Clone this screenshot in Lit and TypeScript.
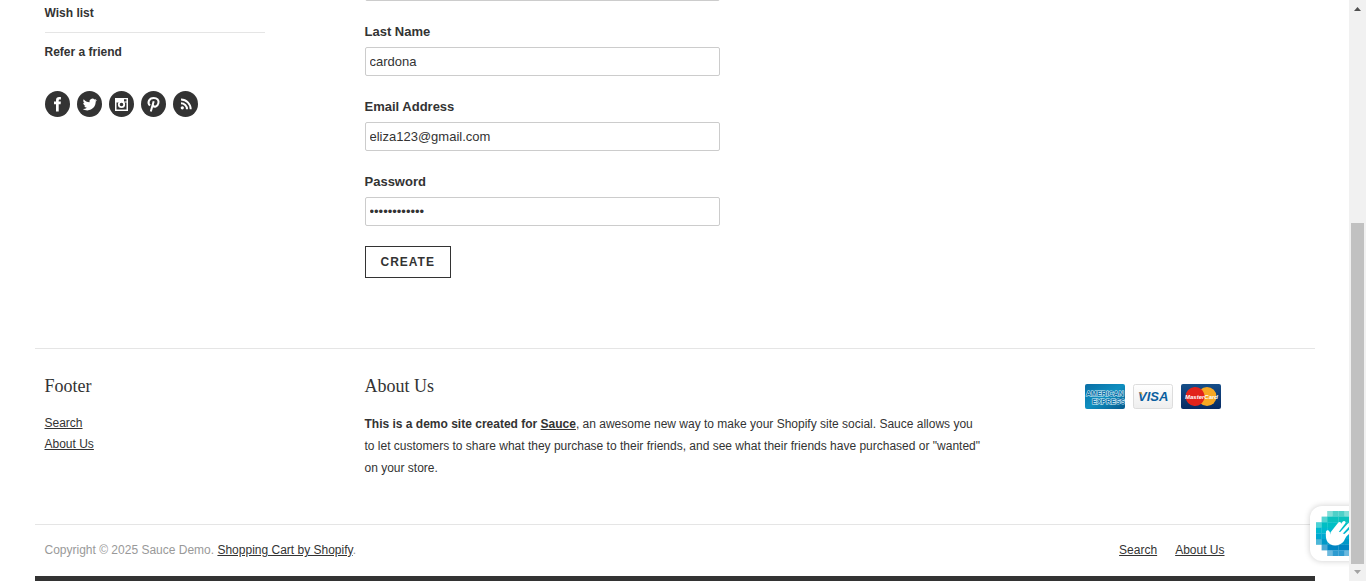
import { LitElement, html, svg, css } from "lit";
import { customElement } from "lit/decorators.js";

@customElement("social-links")
class SocialLinks extends LitElement {
  static styles = css`
    :host { display: block; }
    ul { display: flex; gap: 7px; margin: 0; padding: 0; list-style: none; }
    a { display: block; }
    svg { display: block; width: 25px; height: 26px; }
    .disc { fill: #333; }
    .mark { fill: #fff; }
    .line { fill: none; stroke: #fff; stroke-width: 2; }
  `;

  private items = [
    { name: "Facebook", art: svg`<path class="mark" d="M11 20.500v-7.300H9v-2.600h2V9.300C11 7 12.200 6 14.100 6h1.800v2.400h-1.100c-.9 0-1.100.4-1.100 1.100v1.100h2.200l-.3 2.600h-1.900v7.300z"/>` },
    { name: "Twitter", art: svg`<path class="mark" d="M19.800 8.900c-.5.2-1 .4-1.600.4.600-.3 1-.9 1.200-1.500-.5.300-1.100.5-1.800.7a3 3 0 0 0-5.100 2.700c-2.300-.1-4.400-1.200-5.800-3-.8 1.300-.4 3 .8 3.900-.4 0-.9-.1-1.300-.4 0 1.500 1 2.700 2.300 3-.4.100-.9.100-1.300 0 .4 1.200 1.500 2 2.700 2a6 6 0 0 1-4.200 1.300c1.300.9 2.900 1.400 4.600 1.400 5.500 0 8.500-4.600 8.400-8.800.5-.4.900-1 1.100-1.700z"/>` },
    { name: "Instagram", art: svg`<path class="mark" fill-rule="evenodd" d="M6 7h13v13H6zM7.500 11.500v7h10v-7zM15 8.300v2.200h2.500V8.300z"/><circle cx="12.500" cy="13.500" r="2.700" fill="#333" stroke="#fff" stroke-width="1.800"/>` },
    { name: "Pinterest", art: svg`<path class="line" d="M9 14.600C6 12 7.900 6.900 12.700 6.900c3.600 0 5.300 2.400 4.700 5.300-.6 3.400-4.500 4.700-5.500 2M12.700 10.300L9.800 20.500"/>` },
    { name: "RSS", art: svg`<circle class="mark" cx="9.300" cy="16.800" r="1.600"/><path class="line" d="M8 12.200a6 6 0 0 1 6 6M8 8.500a9.700 9.700 0 0 1 9.700 9.700"/>` },
  ];

  render() {
    return html`<ul>${this.items.map((i) => html`<li><a href="#" aria-label=${i.name}>
      <svg viewBox="0 0 25 26"><ellipse class="disc" cx="12.500" cy="13" rx="12.500" ry="13"/>${i.art}</svg></a></li>`)}</ul>`;
  }
}

@customElement("payment-cards")
class PaymentCards extends LitElement {
  static styles = css`
    :host { display: flex; gap: 8px; }
    svg { display: block; width: 40px; height: 25px; }
    text { font-family: "Liberation Sans", Arial, sans-serif; font-weight: bold; }
    .amex { font-size: 7px; fill: #0b71a8; stroke: #d9f0f8; stroke-width: 1px; paint-order: stroke; }
    .visa { font-size: 13px; font-style: italic; fill: #0b609f; }
    .master { font-size: 6px; font-style: italic; fill: #fff; }
  `;

  render() {
    return html`
      <svg viewBox="0 0 40 25" role="img" aria-label="American Express">
        <defs>
          <linearGradient id="sea" x1="0" y1="0" x2="1" y2="1"><stop offset="0" stop-color="#0a6ea5"/><stop offset=".5" stop-color="#0f8fc0"/><stop offset="1" stop-color="#07598c"/></linearGradient>
        </defs>
        <rect width="40" height="25" rx="2" fill="url(#sea)"/>
        <text class="amex" x="1" y="12">AMERICAN</text>
        <text class="amex" x="7" y="20">EXPRESS</text>
      </svg>
      <svg viewBox="0 0 40 25" role="img" aria-label="Visa">
        <defs><linearGradient id="paper" x1="0" y1="0" x2="0" y2="1"><stop offset="0" stop-color="#fff"/><stop offset="1" stop-color="#eee"/></linearGradient></defs>
        <rect x=".5" y=".5" width="39" height="24" rx="2" fill="url(#paper)" stroke="#ddd"/>
        <text class="visa" x="5" y="17">VISA</text>
        <path d="M5.500 8.300h3.200l1.300 4C9 10.300 7.500 9 5.500 8.300z" fill="#eda42b"/>
      </svg>
      <svg viewBox="0 0 40 25" role="img" aria-label="MasterCard">
        <defs><linearGradient id="navy" x1="0" y1="0" x2="0" y2="1"><stop offset="0" stop-color="#164e88"/><stop offset="1" stop-color="#062a63"/></linearGradient></defs>
        <rect width="40" height="25" rx="2" fill="url(#navy)"/>
        <circle cx="26" cy="12.500" r="9.500" fill="#f7a823"/>
        <path d="M20 5.100a9.500 9.500 0 1 0 0 14.800 9.500 9.500 0 0 0 0-14.800z" fill="#e2231a"/>
        <text class="master" x="4" y="15">MasterCard</text>
      </svg>`;
  }
}

@customElement("captcha-badge")
class CaptchaBadge extends LitElement {
  static styles = css`
    :host { display: block; box-sizing: border-box; width: 55px; height: 55px; border-radius: 12px; background: #fff; box-shadow: 0 0 6px rgba(0, 0, 0, .2); }
    svg { display: block; width: 55px; height: 55px; }
    .hand { fill: #fff; }
    .finger { fill: none; stroke: #fff; stroke-width: 3; stroke-linecap: round; }
  `;

  // "o" is a solid tile, "-" a translucent one, "." an empty place
  private rows = [
    "..-oo-..", ".-oooo-.", "-oooooo-", "oooooooo",
    "oooooooo", "-oooooo-", ".-oooo-.", "..-oo-..",
  ];

  private ramp = ["#4fd0c8", "#0bc1bd", "#00bfc4", "#00b9cf", "#00a9d0", "#0099c8", "#0085c2", "#2d9bd0"];

  render() {
    return html`<svg viewBox="0 0 55 55" role="img" aria-label="Captcha">
      ${this.rows.map((row, r) => [...row].map((k, c) => k === "." ? null : svg`<rect x=${6 + c * 5.6} y=${5 + r * 5.6} width="5.800" height="5.800" fill=${this.ramp[r]} fill-opacity=${k === "-" ? 0.7 : 1}/>`))}
      <path class="hand" d="M16 26c0-2 2.500-2.500 3.300-.8l1.500 3 5-4 11 5-3 6c-3 4-9 5.500-13.500 3C16 36 15.500 31 16 26z"/>
      <path class="finger" d="M22 27L29.500 17.500M26 27L34 16.500M29.500 29L39 18.500M33 31.500L40.500 24.500"/>
    </svg>`;
  }
}

@customElement("page-scrollbar")
class PageScrollbar extends LitElement {
  static styles = css`
    :host { display: flex; flex-direction: column; background: #f1f1f1; }
    svg { display: block; flex: none; width: 17px; height: 17px; }
    .track { flex: 1; display: flex; flex-direction: column; justify-content: flex-end; padding: 0 2px; }
    .thumb { height: 341px; background: #c1c1c1; }
  `;

  render() {
    return html`
      <svg viewBox="0 0 17 17" aria-hidden="true"><path d="M5 11h7L8.500 7z" fill="#505050"/></svg>
      <div class="track"><div class="thumb"></div></div>
      <svg viewBox="0 0 17 17" aria-hidden="true"><path d="M5 6h7L8.500 10z" fill="#a3a3a3"/></svg>`;
  }
}

@customElement("app-root")
class AppRoot extends LitElement {
  static styles = css`
    :host { display: flex; position: relative; min-height: 100vh; overflow: hidden; background: #fff; color: #333; font: 12px/18px "Liberation Sans", Arial, sans-serif; }
    * { box-sizing: border-box; }
    a { color: #333; }
    .view { flex: 1; min-width: 0; position: relative; overflow: hidden; }
    .page { max-width: 1280px; margin: 0 auto; border-bottom: 5px solid #333; }
    .columns { display: grid; grid-template-columns: 4fr 9fr 3fr; }
    .cell { padding: 0 10px; }
    .side { width: 75%; margin-top: -6px; }
    .menu { margin: 0 0 19px; padding: 0; list-style: none; font-weight: bold; }
    .menu li { padding: 10px 0; border-bottom: 1px solid #e5e5e5; }
    .menu li:last-child { border-color: transparent; }
    .menu a { text-decoration: none; }
    form { display: flex; flex-direction: column; align-items: flex-start; margin-top: -28px; padding-bottom: 70px; font-size: 13px; }
    label { margin: 0 0 7px; font-weight: bold; line-height: 16px; }
    input { width: 100%; max-width: 355px; height: 29px; margin: 0 0 23px; padding: 0 4px; border: 1px solid #ccc; border-radius: 2px; background: #fff; color: #333; font: 13px "Liberation Sans", Arial, sans-serif; }
    input[type="password"] { margin-bottom: 20px; }
    button { height: 32px; padding: 0 15px; border: 1px solid #333; background: #fff; color: #333; font: bold 12px "Liberation Sans", Arial, sans-serif; letter-spacing: 1px; }
    .info { padding: 25px 0 45px; border-top: 1px solid #e5e5e5; }
    h2 { margin: 0; font: 18px/24px "Liberation Serif", "Times New Roman", serif; }
    .links { margin: 15px 0 0; padding: 0; list-style: none; line-height: 21px; }
    .about p { max-width: 620px; margin: 15px 0 0; line-height: 22px; }
    payment-cards { margin-top: 10px; }
    .legal { display: flex; justify-content: space-between; padding: 16px 90px 17px 10px; border-top: 1px solid #e5e5e5; color: #999; }
    .legal nav { display: flex; gap: 18px; }
    captcha-badge { position: absolute; right: -16px; bottom: 20px; }
  `;

  render() {
    return html`
      <div class="view">
        <div class="page">
          <main class="columns">
            <aside class="cell side">
              <ul class="menu">
                <li><a href="#">Wish list</a></li>
                <li><a href="#">Refer a friend</a></li>
              </ul>
              <social-links></social-links>
            </aside>
            <div class="cell">
              <form @submit=${(e: Event) => e.preventDefault()}>
                <input type="text" aria-label="First Name">
                <label for="last">Last Name</label>
                <input id="last" type="text" value="cardona">
                <label for="email">Email Address</label>
                <input id="email" type="email" value="eliza123@gmail.com">
                <label for="password">Password</label>
                <input id="password" type="password" value="abcdefghijkl">
                <button type="submit">CREATE</button>
              </form>
            </div>
          </main>
          <footer>
            <div class="columns info">
              <section class="cell">
                <h2>Footer</h2>
                <ul class="links">
                  <li><a href="#">Search</a></li>
                  <li><a href="#">About Us</a></li>
                </ul>
              </section>
              <section class="cell about">
                <h2>About Us</h2>
                <p><b>This is a demo site created for <a href="#">Sauce</a></b>, an awesome new way to make your Shopify site social. Sauce allows you to let customers to share what they purchase to their friends, and see what their friends have purchased or "wanted" on your store.</p>
              </section>
              <div class="cell"><payment-cards></payment-cards></div>
            </div>
            <div class="legal">
              <span>Copyright © 2025 Sauce Demo. <a href="#">Shopping Cart by Shopify</a>.</span>
              <nav><a href="#">Search</a><a href="#">About Us</a></nav>
            </div>
          </footer>
        </div>
        <captcha-badge></captcha-badge>
      </div>
      <page-scrollbar></page-scrollbar>`;
  }
}
